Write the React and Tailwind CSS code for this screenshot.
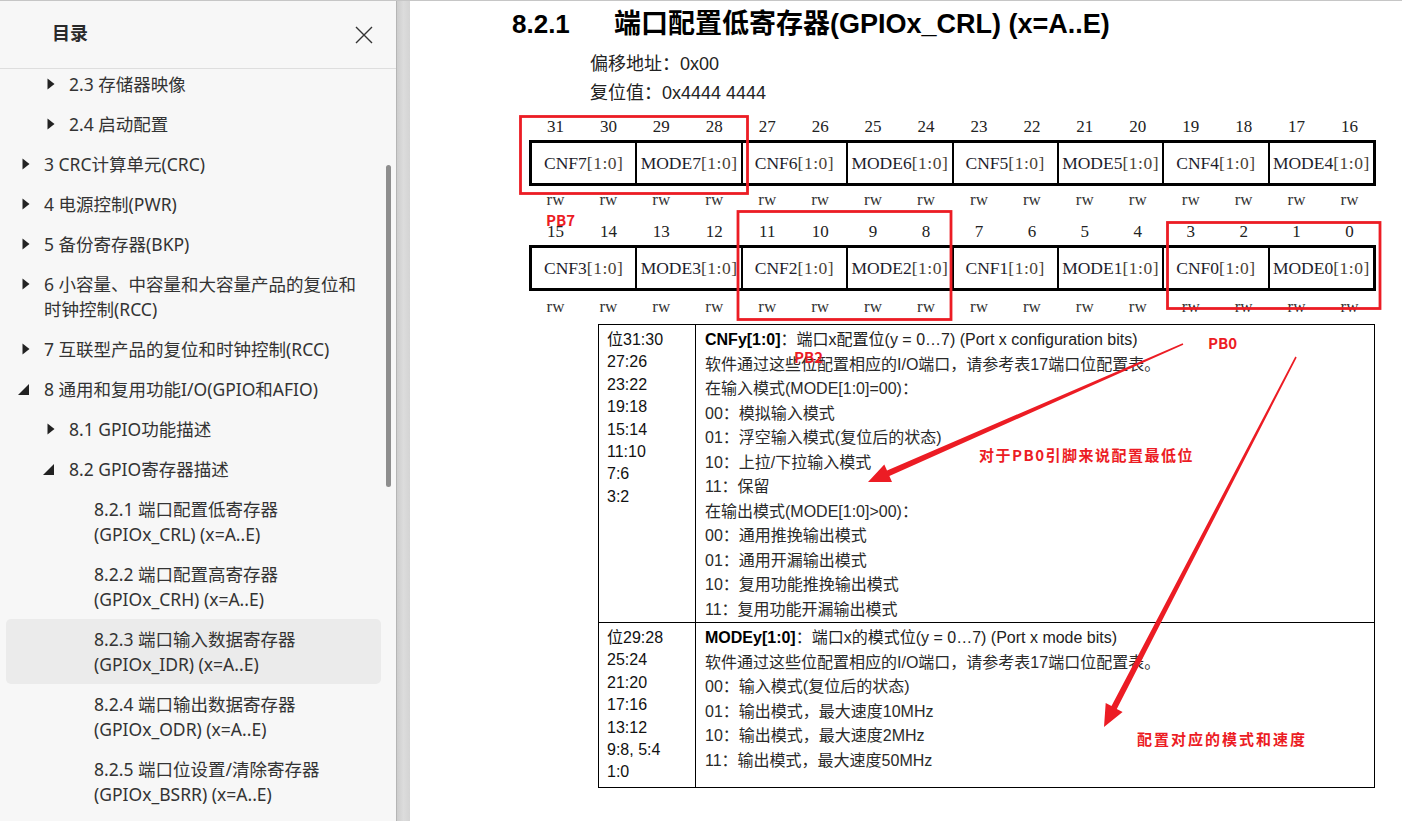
import React from 'react';

// TOC sidebar + PDF page showing the GPIOx_CRL register description
const tocItems = [
  { lvl: 2, tri: 'r', lines: ['2.3 存储器映像'] },
  { lvl: 2, tri: 'r', lines: ['2.4 启动配置'] },
  { lvl: 1, tri: 'r', lines: ['3 CRC计算单元(CRC)'] },
  { lvl: 1, tri: 'r', lines: ['4 电源控制(PWR)'] },
  { lvl: 1, tri: 'r', lines: ['5 备份寄存器(BKP)'] },
  { lvl: 1, tri: 'r', lines: ['6 小容量、中容量和大容量产品的复位和', '时钟控制(RCC)'] },
  { lvl: 1, tri: 'r', lines: ['7 互联型产品的复位和时钟控制(RCC)'] },
  { lvl: 1, tri: 'd', lines: ['8 通用和复用功能I/O(GPIO和AFIO)'] },
  { lvl: 2, tri: 'r', lines: ['8.1 GPIO功能描述'] },
  { lvl: 2, tri: 'd', lines: ['8.2 GPIO寄存器描述'] },
  { lvl: 3, lines: ['8.2.1 端口配置低寄存器', '(GPIOx_CRL) (x=A..E)'] },
  { lvl: 3, lines: ['8.2.2 端口配置高寄存器', '(GPIOx_CRH) (x=A..E)'] },
  { lvl: 3, active: true, lines: ['8.2.3 端口输入数据寄存器', '(GPIOx_IDR) (x=A..E)'] },
  { lvl: 3, lines: ['8.2.4 端口输出数据寄存器', '(GPIOx_ODR) (x=A..E)'] },
  { lvl: 3, lines: ['8.2.5 端口位设置/清除寄存器', '(GPIOx_BSRR) (x=A..E)'] },
];

const padByLevel = { 1: 'pl-[16px]', 2: 'pl-[41px]', 3: 'pl-[66px]' };

const bitsHigh = Array.from({ length: 16 }, (_, i) => 31 - i);
const bitsLow = Array.from({ length: 16 }, (_, i) => 15 - i);
const fieldsHigh = ['CNF7', 'MODE7', 'CNF6', 'MODE6', 'CNF5', 'MODE5', 'CNF4', 'MODE4'];
const fieldsLow = ['CNF3', 'MODE3', 'CNF2', 'MODE2', 'CNF1', 'MODE1', 'CNF0', 'MODE0'];

const cnfBits = ['位31:30', '27:26', '23:22', '19:18', '15:14', '11:10', '7:6', '3:2'];
const modeBits = ['位29:28', '25:24', '21:20', '17:16', '13:12', '9:8, 5:4', '1:0'];

const cnfLines = [
  '软件通过这些位配置相应的I/O端口，请参考表17端口位配置表。',
  '在输入模式(MODE[1:0]=00)：',
  '00：模拟输入模式',
  '01：浮空输入模式(复位后的状态)',
  '10：上拉/下拉输入模式',
  '11：保留',
  '在输出模式(MODE[1:0]>00)：',
  '00：通用推挽输出模式',
  '01：通用开漏输出模式',
  '10：复用功能推挽输出模式',
  '11：复用功能开漏输出模式',
];

const modeLines = [
  '软件通过这些位配置相应的I/O端口，请参考表17端口位配置表。',
  '00：输入模式(复位后的状态)',
  '01：输出模式，最大速度10MHz',
  '10：输出模式，最大速度2MHz',
  '11：输出模式，最大速度50MHz',
];

function Tri({ open }) {
  if (open) {
    return (
      <svg width="11" height="11" viewBox="0 0 11 11" className="-ml-[4px]">
        <path d="M11 0L11 11L0 11Z" fill="#222" />
      </svg>
    );
  }
  return (
    <svg width="8" height="12" viewBox="0 0 8 12">
      <path d="M0.5 0.5L7.5 6L0.5 11.5Z" fill="#222" />
    </svg>
  );
}

function Sidebar() {
  return (
    <aside className="flex w-[397px] shrink-0 flex-col border-r border-[#b5b5b5] bg-[#f7f7f7] font-['Noto_Sans','Noto_Sans_CJK_SC',sans-serif]">
      <div className="flex h-[68px] shrink-0 items-center justify-between border-b border-[#dedede] pl-[52px] pr-[23px]">
        <span className="-mt-[2px] text-[18px] font-bold text-[#2a2a2a]">目录</span>
        <svg width="18" height="18" viewBox="0 0 18 18">
          <path d="M1 1L17 17M17 1L1 17" stroke="#333" strokeWidth="1.4" />
        </svg>
      </div>
      <div className="flex-1 overflow-hidden pl-[6px] pr-[15px]">
        <div className="-mt-[5px]">
          {tocItems.map((item, i) => (
            <div
              key={i}
              className={`flex rounded-[5px] py-[7.5px] ${padByLevel[item.lvl]} ${item.active ? 'bg-[#ebebeb]' : ''}`}
            >
              <div className="flex h-[25px] w-[22px] shrink-0 items-center">
                {item.tri && <Tri open={item.tri === 'd'} />}
              </div>
              <div className="text-[17.5px] leading-[25px] text-[#333] whitespace-nowrap">
                {item.lines.map((l, j) => (
                  <div key={j}>{l}</div>
                ))}
              </div>
            </div>
          ))}
        </div>
      </div>
    </aside>
  );
}

function RegRow({ bits, fields, rwPad }) {
  return (
    <>
      <div className="grid h-[26px] grid-cols-16 items-center text-center text-[17px] text-[#222]">
        {bits.map((b) => (
          <span key={b}>{b}</span>
        ))}
      </div>
      <div className="flex h-[46px] border-[3px] border-black">
        {fields.map((f, i) => (
          <div
            key={f}
            className={`flex flex-1 items-center justify-center text-[17.5px] ${i > 0 ? 'border-l-2 border-black' : ''}`}
          >
            <span className="text-[#1d1d2d]">{f}</span>
            <span className="tracking-[0.5px] text-[#4a4236]">[1:0]</span>
          </div>
        ))}
      </div>
      <div className={`grid h-[33px] grid-cols-16 items-start text-center text-[17px] leading-[22px] text-[#333] ${rwPad}`}>
        {bits.map((b) => (
          <span key={b}>rw</span>
        ))}
      </div>
    </>
  );
}

function DescRow({ bits, head, tail, lines, top }) {
  return (
    <>
      <div className={`border-r border-black pb-[3px] pl-[8px] pt-[4px] leading-[22.4px] ${top ? 'border-t' : ''}`}>
        {bits.map((b) => (
          <div key={b}>{b}</div>
        ))}
      </div>
      <div className={`pl-[9px] pt-[3px] leading-[24.5px] border-black ${top ? 'border-t' : ''}`}>
        <div>
          <span className="font-bold text-black">{head}</span>
          <span className="text-[#222]">{tail}</span>
        </div>
        {lines.map((l, i) => (
          <div key={i} className="text-[#2a2a2a]">{l}</div>
        ))}
      </div>
    </>
  );
}

function Page() {
  return (
    <main className="flex-1 bg-white font-['Liberation_Sans','Noto_Sans_CJK_SC',sans-serif] text-[#111]">
      <h1 className="ml-[102px] mt-[7px] flex h-[32px] items-center font-bold leading-none text-black">
        <span className="w-[102px] text-[26px]">8.2.1</span>
        <span className="text-[27px]">端口配置低寄存器(GPIOx_CRL) (x=A..E)</span>
      </h1>
      <div className="ml-[180px] mt-[10px] text-[18px] leading-[29px] text-[#222]">
        <div>偏移地址：0x00</div>
        <div>复位值：0x4444 4444</div>
      </div>
      <div className="ml-[119px] mt-[6px] w-[847px] font-['Liberation_Serif',serif]">
        <RegRow bits={bitsHigh} fields={fieldsHigh} rwPad="pt-[3px]" />
        <RegRow bits={bitsLow} fields={fieldsLow} rwPad="pt-[5px]" />
      </div>
      <div className="ml-[188px] grid w-[777px] grid-cols-[97px_1fr] border border-black text-[16px]">
        <DescRow
          bits={cnfBits}
          head="CNFy[1:0]"
          tail="：端口x配置位(y = 0…7) (Port x configuration bits)"
          lines={cnfLines}
        />
        <DescRow
          bits={modeBits}
          head="MODEy[1:0]"
          tail="：端口x的模式位(y = 0…7) (Port x mode bits)"
          lines={modeLines}
          top
        />
      </div>
    </main>
  );
}

function Annotations() {
  const red = '#ec1c24';
  return (
    <>
      <svg className="pointer-events-none absolute left-0 top-0" width="1402" height="821">
        <g fill="none" stroke={red} strokeWidth="2.8">
          <rect x="520.5" y="116.5" width="227" height="77" />
          <rect x="738" y="211.5" width="213" height="108" />
          <rect x="1167.5" y="222.5" width="212.5" height="86" />
        </g>
        <polygon
          fill={red}
          points="1183.3,344.7 889.4,475.9 892,481.9 868,482 884.3,464.5 887,470.4 1182.7,343.3"
        />
        <polygon
          fill={red}
          points="1296.7,357.4 1116.8,708.9 1122.6,711.9 1104,727 1105.7,703.1 1111.5,706.1 1295.3,356.6"
        />
      </svg>
      <div className="pointer-events-none absolute inset-0 font-['Noto_Sans_CJK_SC',sans-serif] font-bold text-[#ec1c24]">
        <span className="absolute left-[546px] top-[212px] text-[15px] leading-[16px]">PB7</span>
        <span className="absolute left-[794px] top-[349px] text-[15px] leading-[16px]">PB2</span>
        <span className="absolute left-[1208px] top-[335px] text-[15px] leading-[16px]">PB0</span>
        <span className="absolute left-[979px] top-[446px] text-[15px] leading-[18px] tracking-[1.5px]">
          对于PB0引脚来说配置最低位
        </span>
        <span className="absolute left-[1137px] top-[730px] text-[15px] leading-[18px] tracking-[2px]">
          配置对应的模式和速度
        </span>
      </div>
    </>
  );
}

export default function App() {
  return (
    <div className="relative flex h-[821px] w-[1402px] flex-col overflow-hidden bg-white">
      <div className="h-px shrink-0 bg-[#c6c6c6]" />
      <div className="flex min-h-0 flex-1">
        <Sidebar />
        <div className="w-[13px] shrink-0 bg-gradient-to-r from-[#cdcdcd] via-[#dcdcdc] to-[#d4d4d4]" />
        <Page />
      </div>
      <div className="absolute left-[386px] top-[165px] h-[322px] w-[5px] rounded-full bg-[#8e8e8e]" />
      <Annotations />
    </div>
  );
}
